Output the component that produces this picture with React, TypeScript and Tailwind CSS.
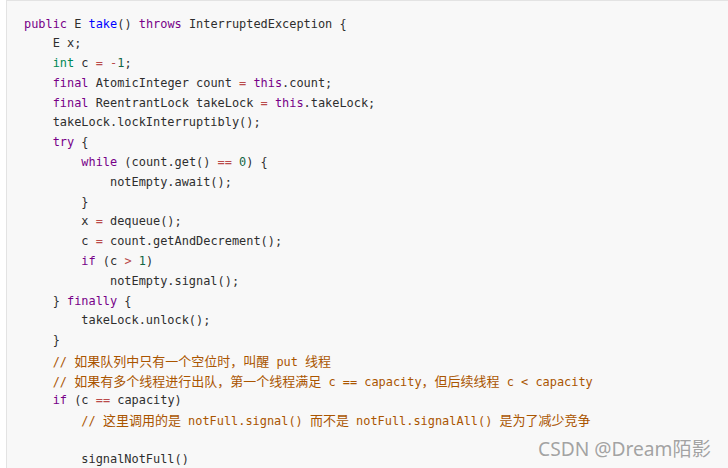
import React from "react";

type Tok = [string, string?];

const KW = "text-[#770088]";
const DEF = "text-[#0000ff]";
const TY = "text-[#008855]";
const OP = "text-[#b94a4a]";
const NUM = "text-[#116644]";
const CM = "text-[#aa5500]";

const lines: Tok[][] = [
  [["public", KW], [" E "], ["take", DEF], ["() "], ["throws", KW], [" InterruptedException {"]],
  [["    E x;"]],
  [["    "], ["int", TY], [" c "], ["=", OP], [" "], ["-", OP], ["1", NUM], [";"]],
  [["    "], ["final", KW], [" AtomicInteger count "], ["=", OP], [" "], ["this", KW], [".count;"]],
  [["    "], ["final", KW], [" ReentrantLock takeLock "], ["=", OP], [" "], ["this", KW], [".takeLock;"]],
  [["    takeLock.lockInterruptibly();"]],
  [["    "], ["try", KW], [" {"]],
  [["        "], ["while", KW], [" (count.get() "], ["==", OP], [" "], ["0", NUM], [") {"]],
  [["            notEmpty.await();"]],
  [["        }"]],
  [["        x "], ["=", OP], [" dequeue();"]],
  [["        c "], ["=", OP], [" count.getAndDecrement();"]],
  [["        "], ["if", KW], [" (c "], [">", OP], [" "], ["1", NUM], [")"]],
  [["            notEmpty.signal();"]],
  [["    } "], ["finally", KW], [" {"]],
  [["        takeLock.unlock();"]],
  [["    }"]],
  [["    "], ["// 如果队列中只有一个空位时，叫醒 put 线程", CM]],
  [["    "], ["// 如果有多个线程进行出队，第一个线程满足 c == capacity，但后续线程 c < capacity", CM]],
  [["    "], ["if", KW], [" (c "], ["==", OP], [" capacity)"]],
  [["        "], ["// 这里调用的是 notFull.signal() 而不是 notFull.signalAll() 是为了减少竞争", CM]],
  [[""]],
  [["        signalNotFull()"]],
];

function renderText(text: string) {
  const parts = text.split(/([\u3000-\u9fff\uff00-\uffef]+)/);
  return parts.map((p, i) =>
    /[\u3000-\u9fff\uff00-\uffef]/.test(p) ? (
      <span
        key={i}
        className="text-[13px] [font-family:'Noto_Sans_CJK_SC',sans-serif]"
      >
        {p}
      </span>
    ) : (
      <React.Fragment key={i}>{p}</React.Fragment>
    )
  );
}

export default function App() {
  return (
    <div className="relative w-[728px] h-[468px] overflow-hidden bg-white">
      <div className="ml-[6px] h-[480px] border-l border-t border-[#e3e3e3] bg-[#f8f8f8] pl-[17px] pt-[13.5px]">
        <pre className="m-0 text-[11.92px] leading-[19.8px] text-[#2e2e2e] [font-family:'DejaVu_Sans_Mono',monospace]">
          {lines.map((toks, li) => (
            <div key={li} className="h-[19.8px] whitespace-pre">
              {toks.map(([t, c], ti) => (
                <span key={ti} className={c}>
                  {renderText(t)}
                </span>
              ))}
            </div>
          ))}
        </pre>
      </div>
      <div className="absolute left-[538px] top-[435px] text-[19.2px] leading-[28px] text-[#a3a3a3] [text-shadow:0_0_2px_#ffffff] [font-family:'Noto_Sans','Noto_Sans_CJK_SC',sans-serif]">
        CSDN @Dream陌影
      </div>
    </div>
  );
}
